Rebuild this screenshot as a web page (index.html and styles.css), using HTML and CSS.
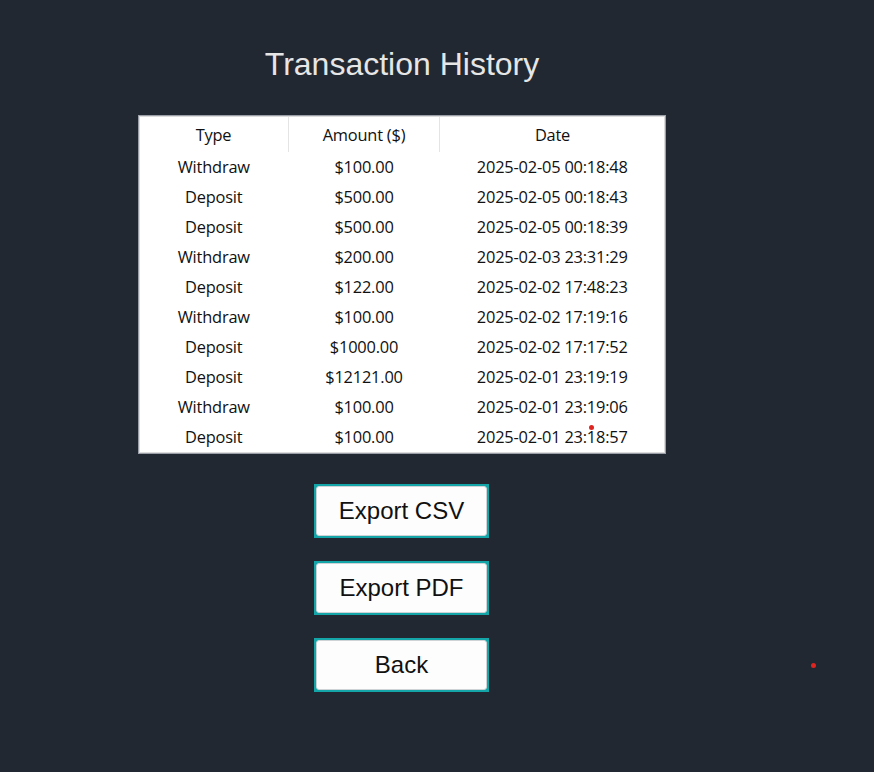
FILE: index.html
```html
<!DOCTYPE html>
<html>
<head>
<meta charset="utf-8">
<link rel="stylesheet" href="styles.css">
</head>
<body>
<div class="page">
  <h1 class="title">Transaction History</h1>
  <div class="table-box">
    <table class="tx">
      <thead>
        <tr><th class="c1">Type</th><th class="c2">Amount ($)</th><th class="c3">Date</th></tr>
      </thead>
      <tbody>
        <tr><td>Withdraw</td><td>$100.00</td><td>2025-02-05 00:18:48</td></tr>
        <tr><td>Deposit</td><td>$500.00</td><td>2025-02-05 00:18:43</td></tr>
        <tr><td>Deposit</td><td>$500.00</td><td>2025-02-05 00:18:39</td></tr>
        <tr><td>Withdraw</td><td>$200.00</td><td>2025-02-03 23:31:29</td></tr>
        <tr><td>Deposit</td><td>$122.00</td><td>2025-02-02 17:48:23</td></tr>
        <tr><td>Withdraw</td><td>$100.00</td><td>2025-02-02 17:19:16</td></tr>
        <tr><td>Deposit</td><td>$1000.00</td><td>2025-02-02 17:17:52</td></tr>
        <tr><td>Deposit</td><td>$12121.00</td><td>2025-02-01 23:19:19</td></tr>
        <tr><td>Withdraw</td><td>$100.00</td><td>2025-02-01 23:19:06</td></tr>
        <tr><td>Deposit</td><td>$100.00</td><td>2025-02-01 23:18:57</td></tr>
      </tbody>
    </table>
  </div>
  <div class="buttons">
    <button class="btn"><span>Export CSV</span></button>
    <button class="btn"><span>Export PDF</span></button>
    <button class="btn"><span>Back</span></button>
  </div>
  <span class="dot dot-a"></span>
  <span class="dot dot-b"></span>
</div>
</body>
</html>
```

FILE: styles.css
```css
html, body {
  margin: 0;
  padding: 0;
  background: #222831;
}
.page {
  position: relative;
  width: 874px;
  height: 772px;
  display: flex;
  flex-direction: column;
  align-items: flex-start;
}
.title {
  margin: 44px 0 0 0;
  width: 804px;
  text-align: center;
  font-family: "Liberation Sans", Arial, sans-serif;
  font-weight: normal;
  font-size: 32px;
  line-height: 40px;
  color: #e6e6e6;
}
.table-box {
  margin: 31px 0 0 138px;
  width: 526px;
  height: 337px;
  border: 1px solid #9a9ea6;
  box-shadow: inset 0 0 0 1px #dcdcdc;
  background: #ffffff;
  box-sizing: content-box;
}
.tx {
  border-collapse: collapse;
  width: 100%;
  margin-top: 1px;
  font-family: "Open Sans", "Noto Sans", sans-serif;
  font-size: 16.4px;
  letter-spacing: -0.2px;
  color: #111111;
  table-layout: fixed;
}
.tx th {
  font-weight: normal;
  height: 35px;
  padding: 0;
  text-align: center;
  border-right: 1px solid #e4e4e4;
}
.tx th.c3 { border-right: none; }
.c1 { width: 149px; }
.c2 { width: 150px; }
.tx td {
  height: 30px;
  padding: 0;
  text-align: center;
  line-height: 30px;
}
.buttons {
  margin: 30px 0 0 314px;
  display: flex;
  flex-direction: column;
  gap: 23px;
}
.btn {
  width: 175px;
  height: 54px;
  padding: 0;
  margin: 0;
  border: 2px solid #14a5a8;
  background: #14a5a8;
  display: flex;
  cursor: pointer;
}
.btn span {
  flex: 1;
  display: flex;
  align-items: center;
  justify-content: center;
  background: #fdfdfd;
  border: 1px solid #cfd3d6;
  border-radius: 3px;
  font-family: "Liberation Sans", Arial, sans-serif;
  font-size: 24px;
  color: #111111;
}
.dot {
  position: absolute;
  width: 5px;
  height: 5px;
  border-radius: 50%;
  background: #e0241f;
}
.dot-a { left: 589px; top: 425px; }
.dot-b { left: 811px; top: 663px; }
```
